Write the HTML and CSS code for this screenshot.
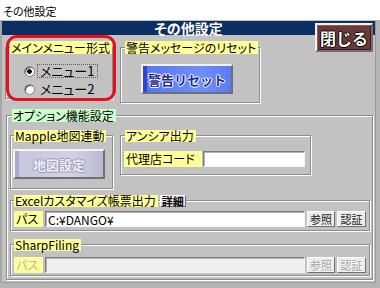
FILE: index.html
```html
<!DOCTYPE html>
<html lang="ja">
<head>
    <meta charset="UTF-8">
    <title>その他設定</title>
    <link rel="stylesheet" href="styles.css">
</head>
<body>
    <div class="window">
        <div class="titlebar">その他設定</div>
        <div class="client">
            <div class="header">その他設定</div>
            <button class="btn-close">閉じる</button>

            <div class="top-row">
                <div class="group menu-group">
                    <div class="legend">メインメニュー形式</div>
                    <div class="radios">
                        <label class="radio-row">
                            <input type="radio" name="menu" checked>
                            <span class="radio-text focused">メニュー1</span>
                        </label>
                        <label class="radio-row">
                            <input type="radio" name="menu">
                            <span class="radio-text">メニュー2</span>
                        </label>
                    </div>
                </div>
                <div class="group reset-group">
                    <div class="legend">警告メッセージのリセット</div>
                    <button class="btn-big btn-blue">警告リセット</button>
                </div>
            </div>

            <div class="group options">
                <div class="legend legend-green">オプション機能設定</div>
                <div class="opt-row">
                    <div class="group mapple-group">
                        <div class="legend">Mapple地図連動</div>
                        <button class="btn-big btn-lavender" disabled>地図設定</button>
                    </div>
                    <div class="group ansia-group">
                        <div class="legend">アンシア出力</div>
                        <div class="field-row">
                            <span class="field-label label-agent">代理店コード</span>
                            <input class="field-input input-agent" type="text">
                        </div>
                    </div>
                </div>

                <div class="group path-group excel-group">
                    <div class="legend-row">
                        <div class="legend">Excelカスタマイズ帳票出力</div>
                        <button class="btn-small btn-detail">詳細</button>
                    </div>
                    <div class="field-row">
                        <span class="field-label label-path">パス</span>
                        <input class="field-input input-path" type="text" value="C:¥DANGO¥">
                        <button class="btn-small">参照</button>
                        <button class="btn-small btn-auth">認証</button>
                    </div>
                </div>

                <div class="group path-group sharp-group">
                    <div class="legend">SharpFiling</div>
                    <div class="field-row disabled">
                        <span class="field-label label-path">パス</span>
                        <input class="field-input input-path" type="text" disabled>
                        <button class="btn-small" disabled>参照</button>
                        <button class="btn-small btn-auth" disabled>認証</button>
                    </div>
                </div>
            </div>
        </div>
    </div>
</body>
</html>
```

FILE: styles.css
```css
body {
    margin: 0;
    font-family: "Noto Sans CJK JP", sans-serif;
    font-size: 12px;
    font-feature-settings: "palt";
    background: #b4b4b4;
    color: #000;
}
.window {
    width: 380px;
    height: 288px;
    background: #b4b4b4;
    overflow: hidden;
}
.titlebar {
    height: 20px;
    background: #fff;
    font-size: 11px;
    line-height: 22px;
    padding-left: 3px;
}
.client {
    position: relative;
    box-sizing: border-box;
    height: 263px;
    margin-right: 4px;
    background: #c2c2c2;
    border-left: 2px solid #a6a6a6;
    border-right: 1px solid #9a9a9a;
    border-bottom: 1px solid #9a9a9a;
    padding-top: 1px;
}
.header {
    height: 14px;
    background: #0c2f63;
    color: #fff;
    font-size: 14px;
    font-weight: bold;
    line-height: 14px;
    text-align: center;
}

/* close button sits over the header band */
.btn-close {
    position: absolute;
    left: 313px;
    top: 3px;
    width: 58px;
    height: 29px;
    box-sizing: border-box;
    padding: 0;
    border: 2px solid;
    border-color: #f2f2f2 #6e6e6e #6e6e6e #f2f2f2;
    background: #6c3939;
    box-shadow: inset 1px 1px 0 #8d5b5b, inset -1px -1px 0 #3e1a1a;
    color: #fff;
    font-family: inherit;
    font-size: 16px;
    font-weight: bold;
    text-shadow: 1px 0 #000, -1px 0 #000, 0 1px #000, 0 -1px #000;
}

.group {
    position: relative;
    box-sizing: border-box;
    border: 1px solid #8c8c8c;
    box-shadow: inset 1px 1px 0 #fff, 1px 1px 0 #fff;
}
.legend {
    width: fit-content;
    height: 13px;
    margin: -7px 0 0 4px;
    padding: 0 2px 0 1px;
    background: #ffff99;
    line-height: 13px;
    white-space: nowrap;
}
.legend-green { background: #ccffcc; margin-left: 5px; }

.top-row {
    display: flex;
    align-items: flex-start;
    gap: 7px;
    margin-top: 12px;
    padding-left: 3px;
}
.menu-group { width: 108px; height: 52px; }
.menu-group::after {
    content: "";
    position: absolute;
    left: 0;
    top: -13px;
    width: 110px;
    height: 66px;
    box-sizing: border-box;
    border: 3px solid #e5101c;
    border-radius: 11px;
    pointer-events: none;
}
.radios {
    display: flex;
    flex-direction: column;
    gap: 4px;
    margin-top: 10px;
    padding-left: 18px;
}
.radio-row {
    display: flex;
    align-items: center;
    gap: 2px;
    height: 14px;
}
.radio-row input {
    appearance: none;
    width: 11px;
    height: 11px;
    margin: 0;
    border-radius: 50%;
    border: 1px solid #858585;
    background: #fff;
    box-shadow: inset 1px 1px 0 #505050;
}
.radio-row input:checked {
    background: radial-gradient(circle, #000 0 2px, #fff 2.6px);
}
.radio-text {
    font-size: 13px;
    line-height: 12px;
    padding: 0 3px 0 2px;
    border: 1px solid transparent;
}
.radio-text.focused { border: 1px dotted #5c5c5c; }

.reset-group { width: 140px; height: 56px; }

.btn-big {
    display: block;
    width: 92px;
    height: 30px;
    box-sizing: border-box;
    padding: 0;
    border: 2px solid;
    border-color: #f4f4f4 #707070 #707070 #f4f4f4;
    font-family: inherit;
    font-size: 13px;
    font-weight: bold;
}
.btn-blue {
    margin: 10px 0 0 20px;
    background: linear-gradient(to right, #2f46d2 0 4px, #5777f0 4px, #6d8fff 65%, #5b7cf2);
    color: #1c2a9c;
    text-shadow: 1px 0 #fff, -1px 0 #fff, 0 1px #fff, 0 -1px #fff;
}
.btn-lavender {
    margin: 7px 0 0 2px;
    background: linear-gradient(to right, #a9a9cf 0 4px, #c6c6dc 4px, #d2d2e2 65%, #b9b9d4);
    color: #eeeef8;
    text-shadow: 1px 0 #9a9ab2, -1px 0 #9a9ab2, 0 1px #9a9ab2, 0 -1px #9a9ab2;
}

.options {
    width: 367px;
    height: 165px;
    margin: 12px 0 0 4px;
}
.opt-row {
    display: flex;
    align-items: flex-start;
    gap: 7px;
    margin-top: 13px;
    padding-left: 3px;
}
.mapple-group { width: 103px; height: 54px; }
.mapple-group .legend { margin-left: 3px; height: 12px; line-height: 12px; margin-top: -6px; }
.ansia-group { width: 191px; height: 40px; }
.ansia-group .legend { height: 12px; line-height: 12px; margin-top: -6px; }
.ansia-group .field-row { margin-top: 9px; padding-left: 3px; }

.field-row {
    display: flex;
    align-items: stretch;
    gap: 2px;
    height: 16px;
}
.field-label {
    background: #ffff99;
    line-height: 16px;
    padding-left: 2px;
    box-sizing: border-box;
}
.label-agent { width: 78px; }
.label-path { width: 29px; }
.field-input {
    box-sizing: border-box;
    height: 100%;
    margin: 0;
    padding: 0 2px;
    border: 1px solid;
    border-color: #7c7c7c #f4f4f4 #f4f4f4 #7c7c7c;
    box-shadow: inset 1px 1px 0 #b4b4b4;
    background: #fff;
    font-family: inherit;
    font-size: 12px;
    color: #000;
    outline: none;
}
.input-agent { width: 102px; margin-left: -1px; }
.input-path { width: 260px; }
.btn-small {
    width: 28px;
    height: 16px;
    box-sizing: border-box;
    padding: 0;
    border: 1px solid;
    border-color: #fff #707070 #707070 #fff;
    background: #ececec;
    font-family: inherit;
    font-size: 11px;
    line-height: 13px;
    color: #222;
}
.btn-auth { width: 29px; }

.path-group {
    width: 360px;
    margin-left: 3px;
}
.path-group .field-row { padding-left: 3px; }
.excel-group { height: 31px; margin-top: 11px; }
.excel-group .field-row { margin-top: 4px; }
.legend-row {
    display: flex;
    gap: 2px;
    margin: -6px 0 0 3px;
}
.legend-row .legend { margin: 0; height: 12px; line-height: 12px; }
.btn-detail {
    width: 26px;
    height: 12px;
    font-weight: bold;
    line-height: 10px;
    color: #000;
}
.sharp-group { height: 32px; margin-top: 13px; }
.sharp-group .legend { margin: -6px 0 0 3px; height: 12px; line-height: 12px; }
.sharp-group .field-row { margin-top: 6px; }

.disabled .field-label { color: #b9b9a6; }
.disabled .field-input { background: #efefef; }
.btn-small:disabled {
    color: #a6a6a6;
    text-shadow: 1px 1px 0 #fff;
}
```
